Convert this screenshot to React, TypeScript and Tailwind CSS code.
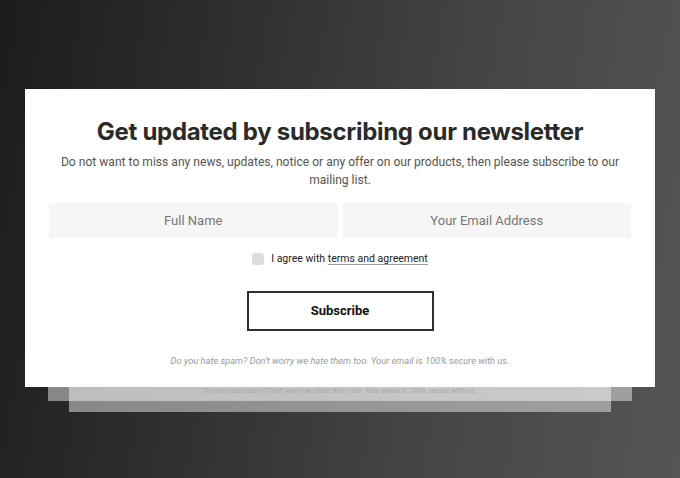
import { useState } from 'react';

export default function App() {
  const [agree, setAgree] = useState(false);

  return (
    <div className="min-h-[478px] w-[680px] overflow-hidden bg-[linear-gradient(100deg,#1c1c1c_0%,#2e2e2e_30%,#454545_65%,#555555_100%)] px-[25px] pt-[89px] font-['Roboto','Liberation_Sans',sans-serif]">
      <div className="relative">
        {/* stacked ghost cards behind */}
        <div className="absolute left-[23px] right-[23px] top-full h-[14px] bg-white/45" />
        <div className="absolute left-[44px] right-[44px] top-full h-[25px] bg-white/45">
          <p className="mt-[-1px] text-center text-[7.5px] italic leading-[10px] text-[#a8a8a8]">
            Do you hate spam? Don't worry we hate them too. Your email is 100% secure with us.
          </p>
        </div>

        <div className="relative flex flex-col items-center bg-white px-6 pb-[19px] pt-[27px]">
          <h1 className="font-['Inter','Liberation_Sans',sans-serif] text-[24px] font-bold leading-8 tracking-[-0.3px] text-[#2a2a2a]">
            Get updated by subscribing our newsletter
          </h1>
          <p className="mt-[5px] max-w-[570px] text-center text-[12.1px] leading-[18px] text-[#555]">
            Do not want to miss any news, updates, notice or any offer on our products, then please subscribe to our mailing list.
          </p>

          <div className="mt-[14px] grid w-full grid-cols-2 gap-[5px]">
            <input
              placeholder="Full Name"
              className="h-[35px] bg-[#f6f6f6] text-center text-[13px] text-[#444] outline-none placeholder:text-[#777]"
            />
            <input
              placeholder="Your Email Address"
              className="h-[35px] bg-[#f6f6f6] text-center text-[13px] text-[#444] outline-none placeholder:text-[#777]"
            />
          </div>

          <label className="mt-[13px] flex h-4 items-center gap-[7px] text-[10.5px] text-[#222]">
            <span
              onClick={() => setAgree(!agree)}
              className={`h-3 w-3 rounded-[3px] ${agree ? 'bg-[#333]' : 'bg-[#dcdcdc]'}`}
            />
            <span>
              I agree with{' '}
              <span className="underline decoration-[#999] underline-offset-2">terms and agreement</span>
            </span>
          </label>

          <button className="mt-[24px] h-10 w-[187px] border-2 border-[#2e2e2e] bg-white text-[13px] font-bold text-[#111]">
            Subscribe
          </button>

          <p className="mt-[23px] text-[9.3px] italic leading-[14px] text-[#9a9a9a]">
            Do you hate spam? Don't worry we hate them too. Your email is 100% secure with us.
          </p>
        </div>
      </div>
    </div>
  );
}
